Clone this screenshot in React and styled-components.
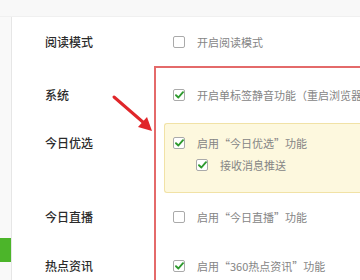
import React from 'react';
import styled, { createGlobalStyle } from 'styled-components';

const GlobalStyle = createGlobalStyle`
  html, body {
    margin: 0;
    padding: 0;
    background: #fff;
  }
  body {
    font-family: "Noto Sans CJK SC", "Noto Sans", sans-serif;
  }
`;

const Page = styled.div`
  position: relative;
  width: 360px;
  height: 280px;
  overflow: hidden;
  display: flex;
  flex-direction: column;
`;

const TopBar = styled.div`
  height: 16px;
  flex-shrink: 0;
  background: #f8f8f8;
  border-bottom: 1px solid #f0f0f0;
`;

const Body = styled.div`
  flex: 1;
  display: flex;
`;

const Sidebar = styled.div`
  width: 11px;
  flex-shrink: 0;
  background: #f9f9f9;
  border-right: 1px solid #e6e6e6;
  display: flex;
  flex-direction: column;
  padding-top: 221px;
`;

const SideActive = styled.div`
  height: 24px;
  background: #4cb52a;
`;

const Content = styled.div`
  flex: 1;
  padding: 14px 0 0 33px;
  display: flex;
  flex-direction: column;
`;

const Row = styled.div`
  display: flex;
  align-items: flex-start;
  margin-top: ${p => p.$gap || 0}px;
`;

const Label = styled.div`
  width: 119px;
  flex-shrink: 0;
  font-size: 12px;
  line-height: 22px;
  color: #2b2b2b;
  font-weight: 500;
  padding-top: ${p => p.$offset || 0}px;
`;

const Options = styled.div`
  flex: 1;
  display: flex;
  flex-direction: column;
`;

const Option = styled.label`
  display: flex;
  align-items: center;
  gap: 12px;
  height: 22px;
  padding-left: ${p => (p.$nested ? 32 : 9)}px;
  font-size: 11px;
  color: #858585;
  white-space: nowrap;
`;

const Box = styled.span`
  width: 12px;
  height: 12px;
  box-sizing: border-box;
  flex-shrink: 0;
  border: 1px solid #aaa;
  border-radius: 2px;
  background: #fff;
  display: flex;
  align-items: center;
  justify-content: center;
`;

const Group = styled.div`
  background: #fdf8de;
  border: 1px solid #f1e2a6;
  border-right: none;
  border-radius: 3px 0 0 3px;
  padding: 8px 0 16px 0;
  display: flex;
  flex-direction: column;
`;

const GroupOption = styled(Option)`
  padding-left: ${p => (p.$nested ? 31 : 8)}px;
`;

const Highlight = styled.div`
  position: absolute;
  left: 154px;
  top: 66px;
  width: 240px;
  height: 260px;
  border: 2px solid #e46a6a;
  box-sizing: border-box;
  pointer-events: none;
`;

const Arrow = styled.svg`
  position: absolute;
  left: 108px;
  top: 92px;
  pointer-events: none;
`;

function Check({ checked }) {
  return (
    <Box>
      {checked && (
        <svg width="9" height="8" viewBox="0 0 9 8">
          <path d="M1 4.2 L3.4 6.5 L8 1.2" fill="none" stroke="#2e9a2e" strokeWidth="1.9" strokeLinecap="round" strokeLinejoin="round" />
        </svg>
      )}
    </Box>
  );
}

export default function App() {
  return (
    <>
      <GlobalStyle />
      <Page>
        <TopBar />
        <Body>
          <Sidebar>
            <SideActive />
          </Sidebar>
          <Content>
            <Row>
              <Label>阅读模式</Label>
              <Options>
                <Option><Check />开启阅读模式</Option>
              </Options>
            </Row>
            <Row $gap={31}>
              <Label>系统</Label>
              <Options>
                <Option><Check checked />开启单标签静音功能（重启浏览器后生效）</Option>
              </Options>
            </Row>
            <Row $gap={17}>
              <Label $offset={9}>今日优选</Label>
              <Options>
                <Group>
                  <GroupOption><Check checked />启用“今日优选”功能</GroupOption>
                  <GroupOption $nested><Check checked />接收消息推送</GroupOption>
                </Group>
              </Options>
            </Row>
            <Row $gap={13}>
              <Label>今日直播</Label>
              <Options>
                <Option><Check />启用“今日直播”功能</Option>
              </Options>
            </Row>
            <Row $gap={27}>
              <Label>热点资讯</Label>
              <Options>
                <Option><Check checked />启用“360热点资讯”功能</Option>
              </Options>
            </Row>
          </Content>
        </Body>
        <Highlight />
        <Arrow width="50" height="46" viewBox="0 0 50 46">
          <line x1="6" y1="5" x2="36" y2="31" stroke="#e0262a" strokeWidth="3" strokeLinecap="round" />
          <polygon points="44,39 30,35 39,25" fill="#e0262a" />
        </Arrow>
      </Page>
    </>
  );
}
